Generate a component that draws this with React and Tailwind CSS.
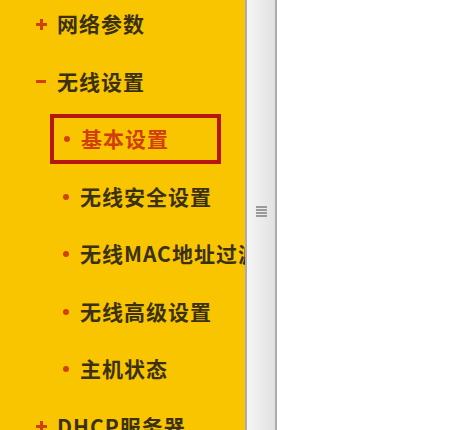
const font = { fontFamily: '"Noto Sans CJK SC", "Noto Sans", sans-serif' };

const Plus = () => (
  <svg width="11" height="11" viewBox="0 0 11 11" className="shrink-0">
    <path d="M4 0h3v4h4v3H7v4H4V7H0V4h4z" fill="#d2410c" />
  </svg>
);

const Minus = () => (
  <svg width="11" height="11" viewBox="0 0 11 11" className="shrink-0">
    <rect x="0" y="4" width="10" height="3" fill="#d2410c" />
  </svg>
);

const Dot = () => <span className="w-[6px] h-[6px] rounded-full bg-[#d2410c] shrink-0" />;

const TopItem = ({ icon, label }) => (
  <div className="h-[57.5px] flex items-center pl-[36px] gap-[10px]">
    {icon}
    <span className="text-[21px] font-semibold tracking-[1px] text-[#3b3110]">{label}</span>
  </div>
);

const SubItem = ({ label }) => (
  <div className="h-[57.5px] flex items-center pl-[63px] gap-[11px]">
    <Dot />
    <span className="text-[21px] font-semibold tracking-[1px] text-[#3b3110]">{label}</span>
  </div>
);

export default function App() {
  return (
    <div className="w-[450px] h-[430px] flex bg-white overflow-hidden" style={font}>
      {/* menu */}
      <div className="w-[245px] h-full bg-[#f8c500] overflow-hidden whitespace-nowrap">
        <div className="-mt-[4.75px]">
          <TopItem icon={<Plus />} label="网络参数" />
          <TopItem icon={<Minus />} label="无线设置" />
          <div className="h-[57.5px] flex items-center pl-[50px]">
            <div className="w-[171px] h-[50px] border-4 border-[#b5170f] flex items-center pl-[10px] gap-[11px]">
              <Dot />
              <span className="text-[21px] font-semibold tracking-[1px] text-[#d23d0c]">基本设置</span>
            </div>
          </div>
          <SubItem label="无线安全设置" />
          <SubItem label="无线MAC地址过滤" />
          <SubItem label="无线高级设置" />
          <SubItem label="主机状态" />
          <TopItem icon={<Plus />} label="DHCP服务器" />
        </div>
      </div>

      {/* scrollbar */}
      <div className="w-[32px] h-full flex border-l-2 border-r-2 border-[#acacac] bg-gradient-to-r from-[#f6f6f6] to-[#e1e1e1]">
        <div className="flex-1 flex flex-col items-center pt-[206px] gap-[1.5px]">
          <div className="w-[11px] h-[1.5px] bg-[#9a9a9a]" />
          <div className="w-[11px] h-[1.5px] bg-[#9a9a9a]" />
          <div className="w-[11px] h-[1.5px] bg-[#9a9a9a]" />
          <div className="w-[11px] h-[1.5px] bg-[#9a9a9a]" />
        </div>
      </div>

      {/* content */}
      <div className="flex-1 h-full bg-white" />
    </div>
  );
}
